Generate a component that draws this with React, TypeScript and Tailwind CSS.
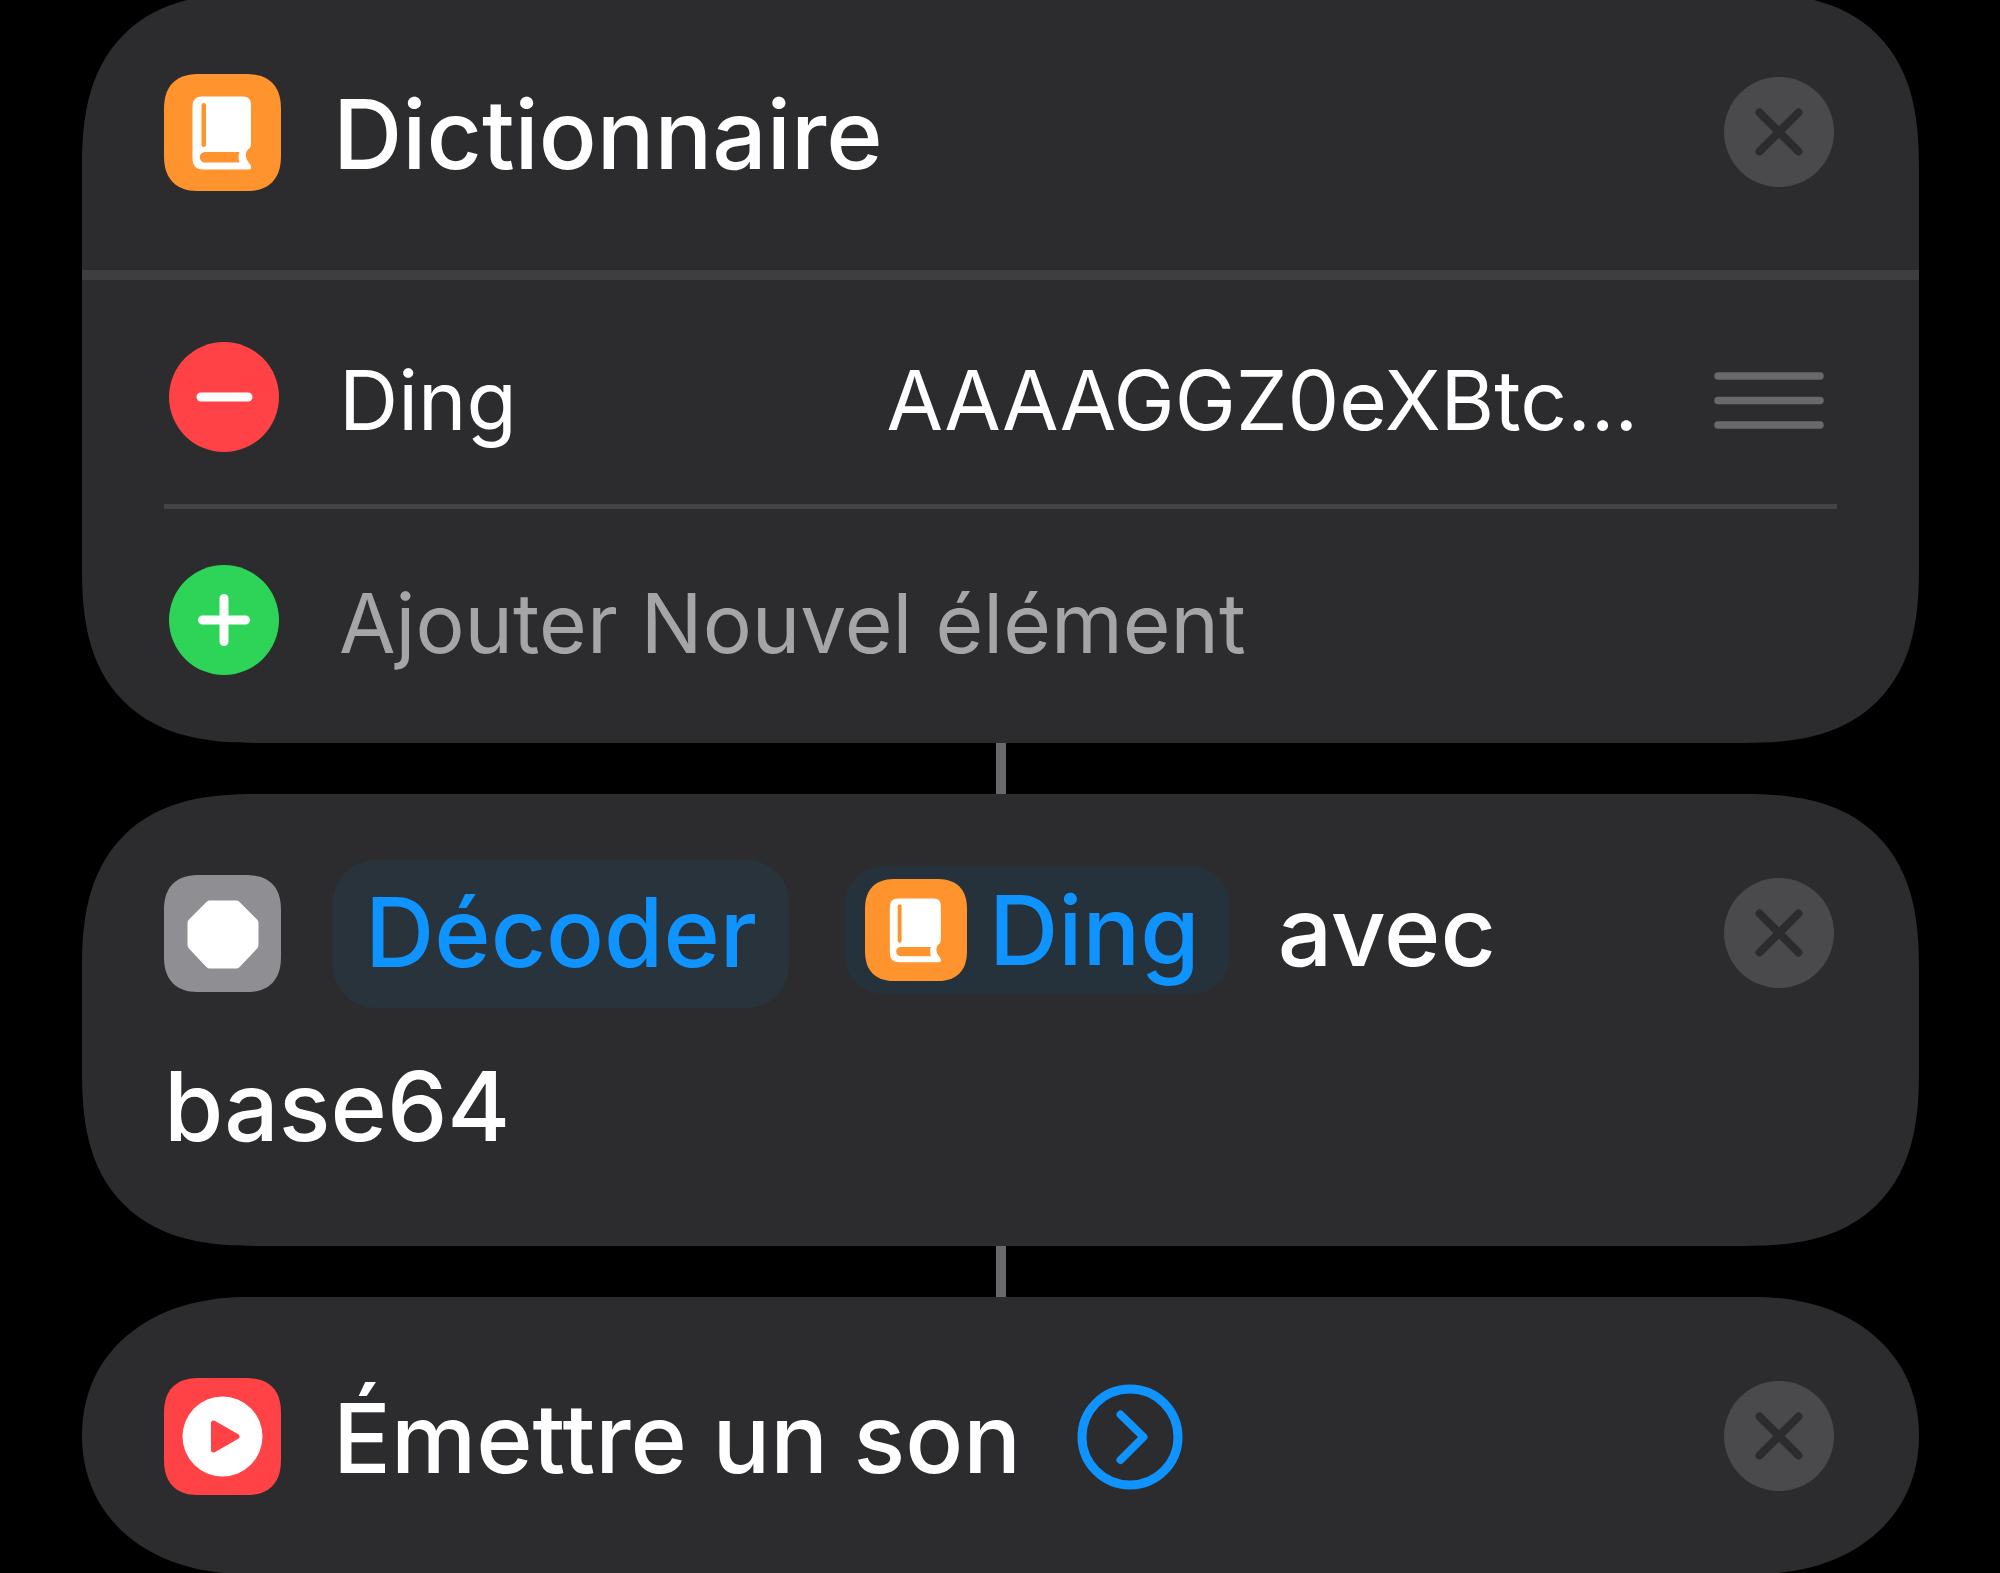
import { FC, ReactNode, useState } from "react"

interface IconProps {
  className?: string
}

const TILE = "size-[117px] shrink-0 rounded-[36px] [corner-shape:superellipse(1.3)]"
const TITLE = "ml-[52px] pt-1 text-[96px] leading-[171px] font-medium"
const PHRASE = "pb-1 text-[96px] leading-[171px] font-medium"
const CHIP = "text-[96px] font-medium text-[#0f93ff]"
const FIELD = "min-w-0 bg-transparent p-0 pt-2 text-[82px] leading-[100px] text-white outline-none"

const BookIcon: FC<IconProps> = ({ className }) => (
  <svg viewBox="0 0 117 117" className={className} aria-hidden="true">
    <path
      fill="#fff"
      d="M38 22.500H79Q87 22.500 87 30.500V70Q87 73.500 84 75.500C81.500 78 81 83 84 87.500L86.500 91Q88.500 95.500 84.500 95.500H39Q28.500 95.500 28.500 84V32Q28.500 22.500 38 22.500Z"
    />
    <rect x="37.500" y="29" width="4.500" height="44" rx="2.250" fill="#ff932e" />
    <path fill="#ff932e" d="M41 78H75.500Q73.500 83 75.500 88.500H41A5.250 5.250 0 0 1 41 78Z" />
  </svg>
)

const OctagonIcon: FC<IconProps> = ({ className }) => (
  <svg viewBox="0 0 117 117" className={className} aria-hidden="true">
    <path
      fill="#fff"
      stroke="#fff"
      strokeWidth="10"
      strokeLinejoin="round"
      d="M46 30.500H72L89.500 48V70L72 88.500H46L28.500 70V48Z"
    />
  </svg>
)

const PlayIcon: FC<IconProps> = ({ className }) => (
  <svg viewBox="0 0 117 117" className={className} aria-hidden="true">
    <circle cx="58.500" cy="58.500" r="40" fill="#fff" />
    <path
      d="M49.500 45V72L73 58.500Z"
      fill="#ff4245"
      stroke="#ff4245"
      strokeWidth="5"
      strokeLinejoin="round"
    />
  </svg>
)

const CloseButton: FC<{ label: string; onClick: () => void }> = ({ label, onClick }) => (
  <button
    type="button"
    aria-label={label}
    onClick={onClick}
    className="mt-8 mr-[3px] size-[110px] shrink-0 rounded-full bg-[#4a4a4d]"
  >
    <svg viewBox="0 0 110 110" className="size-full" aria-hidden="true">
      <path
        d="M35.500 35.500L74.500 74.500M74.500 35.500L35.500 74.500"
        stroke="#2c2c2e"
        strokeWidth="8"
        strokeLinecap="round"
      />
    </svg>
  </button>
)

const Connector = () => <div className="mx-auto h-[51px] w-2.5 bg-[#69696b]" />

interface ActionCardProps {
  name: string
  header: ReactNode
  children?: ReactNode
  shape?: string
}

const ActionCard: FC<ActionCardProps> = ({
  name,
  header,
  children,
  shape = "rounded-[175px] [corner-shape:superellipse(1.35)]",
}) => {
  const [visible, setVisible] = useState(true)

  if (!visible) return null

  return (
    <section aria-label={name} className={`overflow-hidden bg-[#2c2c2e] ${shape}`}>
      <div className="flex items-start justify-between px-[82px] pt-[52px] pb-[50px]">
        <div className="flex flex-wrap items-center">{header}</div>
        <CloseButton label={`Supprimer ${name}`} onClick={() => setVisible(false)} />
      </div>
      {children}
    </section>
  )
}

const App: FC = () => {
  const [itemKey, setItemKey] = useState("Ding")
  const [itemValue, setItemValue] = useState("AAAAGGZ0eXBtc…")

  return (
    <main className="h-screen overflow-hidden bg-black pr-[81px] pl-[82px] font-['Inter',sans-serif] text-white">
      <div className="-mt-[7px]">
        <ActionCard
          name="Dictionnaire"
          header={
            <>
              <BookIcon className={`${TILE} bg-[#ff932e]`} />
              <h2 className={TITLE}>Dictionnaire</h2>
            </>
          }
        >
          <div className="border-t-[10px] border-[#3e3e41] px-[82px] pt-2 pb-3.5">
            <div className="flex items-center border-b-[5px] border-[#444446] pt-[54px] pb-[52px] pl-[5px]">
              <button
                type="button"
                aria-label="Supprimer l’élément"
                className="size-[110px] shrink-0 rounded-full bg-[#ff4245]"
              >
                <svg viewBox="0 0 110 110" className="size-full" aria-hidden="true">
                  <path d="M32 55H79" stroke="#fff" strokeWidth="9" strokeLinecap="round" />
                </svg>
              </button>
              <input
                aria-label="Clé"
                value={itemKey}
                onChange={(e) => setItemKey(e.target.value)}
                className={`${FIELD} ml-[60px] w-[400px]`}
              />
              <input
                aria-label="Texte"
                value={itemValue}
                onChange={(e) => setItemValue(e.target.value)}
                className={`${FIELD} flex-1 text-right`}
              />
              <button type="button" aria-label="Réordonner" className="mr-[13px] ml-[76px] shrink-0">
                <svg viewBox="0 0 110 110" className="size-[110px]" aria-hidden="true">
                  <path
                    d="M4 34H106M4 58.500H106M4 83H106"
                    stroke="#69696c"
                    strokeWidth="7.500"
                    strokeLinecap="round"
                  />
                </svg>
              </button>
            </div>
            <button
              type="button"
              className="flex w-full items-center pt-[56px] pb-[54px] pl-[5px] text-left"
            >
              <svg viewBox="0 0 110 110" className="size-[110px] shrink-0" aria-hidden="true">
                <circle cx="55" cy="55" r="55" fill="#2dd457" />
                <path
                  d="M33.500 55H76.500M55 33.500V76.500"
                  stroke="#fff"
                  strokeWidth="9"
                  strokeLinecap="round"
                />
              </svg>
              <span className="ml-[60px] pt-2 text-[82px] leading-[100px] text-[#a5a5a7]">
                Ajouter Nouvel élément
              </span>
            </button>
          </div>
        </ActionCard>

        <Connector />

        <ActionCard
          name="Décoder"
          header={
            <>
              <OctagonIcon className={`${TILE} bg-[#8e8e93]`} />
              <button
                type="button"
                className={`${CHIP} ml-[52px] rounded-[42px] bg-[#29333b] px-8 pb-1 leading-[144px]`}
              >
                Décoder
              </button>
              <button
                type="button"
                className={`${CHIP} mb-2 ml-14 flex items-center gap-[22px] rounded-[38px] bg-[#25323c] pr-[30px] pl-5 leading-[128px]`}
              >
                <BookIcon className="size-[102px] shrink-0 rounded-[31px] bg-[#ff932e] [corner-shape:superellipse(1.3)]" />
                Ding
              </button>
              <span className={`${PHRASE} ml-12`}>avec</span>
              <span className={`${PHRASE} basis-full`}>base64</span>
            </>
          }
        />

        <Connector />

        <ActionCard
          name="Émettre un son"
          shape="rounded-[165px/139px] [corner-shape:superellipse(1.1)]"
          header={
            <>
              <PlayIcon className={`${TILE} bg-[#ff4245]`} />
              <h2 className={TITLE}>Émettre un son</h2>
              <button type="button" aria-label="Afficher plus" className="ml-14">
                <svg viewBox="0 0 106 106" className="size-[106px]" fill="none" aria-hidden="true">
                  <circle cx="53" cy="53" r="48" stroke="#0f93ff" strokeWidth="9" />
                  <path
                    d="M43.500 30.500L66.500 53L43.500 76"
                    stroke="#0f93ff"
                    strokeWidth="8"
                    strokeLinecap="round"
                    strokeLinejoin="round"
                  />
                </svg>
              </button>
            </>
          }
        />
      </div>
    </main>
  )
}

export default App
